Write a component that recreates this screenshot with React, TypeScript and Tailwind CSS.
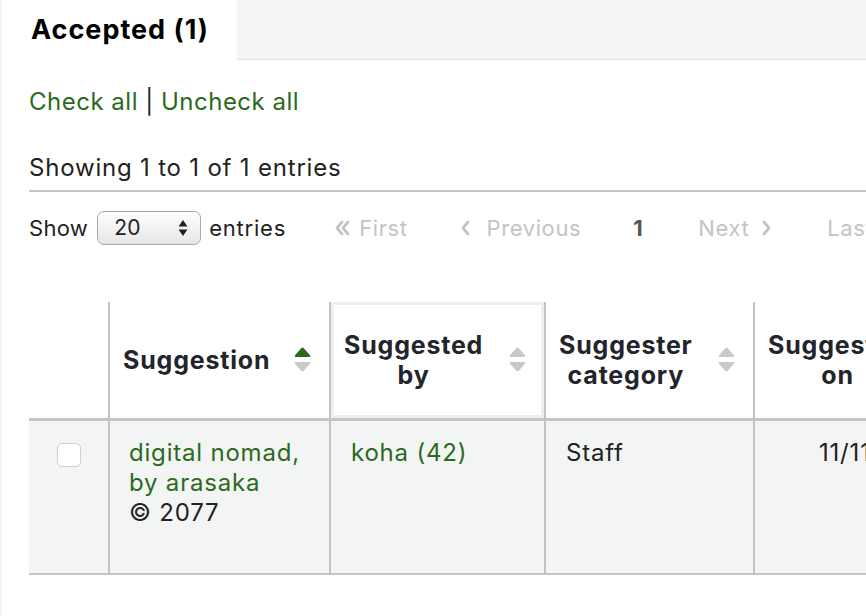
import React from 'react';

const font = { fontFamily: 'Inter, "Noto Sans", sans-serif' };

function SortIcon({ active = false }: { active?: boolean }) {
  return (
    <svg width="17" height="26" viewBox="0 0 17 26" className="shrink-0">
      <path
        d="M7 1.4 Q8.5 -0.2 10 1.4 L16 8.2 Q17 10 15 10 H2 Q0 10 1 8.2 Z"
        fill={active ? '#2b6a1d' : '#c9c9c9'}
      />
      <path d="M2 15 H15 Q17 15 16 16.8 L10 23.6 Q8.5 25.2 7 23.6 L1 16.8 Q0 15 2 15 Z" fill="#c9c9c9" />
    </svg>
  );
}

function Chevron({ dir, double = false }: { dir: 'left' | 'right'; double?: boolean }) {
  const d = dir === 'left' ? 'M8 2 L3 8 L8 14' : 'M3 2 L8 8 L3 14';
  return (
    <svg
      width={double ? 16 : 11}
      height="16"
      viewBox={double ? '0 0 16 16' : '0 0 11 16'}
      fill="none"
      className="shrink-0"
    >
      <path d={d} stroke="#c4c4c4" strokeWidth="2.8" strokeLinecap="round" strokeLinejoin="round" />
      {double && (
        <path d="M14 2 L9 8 L14 14" stroke="#c4c4c4" strokeWidth="2.8" strokeLinecap="round" strokeLinejoin="round" />
      )}
    </svg>
  );
}

function HeaderCell({
  children,
  active = false,
  focused = false
}: {
  children: React.ReactNode;
  active?: boolean;
  focused?: boolean;
}) {
  return (
    <th
      className={`align-middle border-l-2 border-[#c2c2c2] p-0 ${
        focused ? 'shadow-[inset_0_0_0_3px_#efefef]' : ''
      }`}
    >
      <div className="flex items-center h-[116px] pl-[13px] pr-[18px]">
        <span className="text-center whitespace-nowrap text-[25px] leading-[30px] tracking-[0.8px] font-bold text-[#22252a]">
          {children}
        </span>
        <span className="flex-1" />
        <SortIcon active={active} />
      </div>
    </th>
  );
}

export default function App() {
  return (
    <div className="w-[866px] h-[616px] overflow-hidden bg-[#f3f4f4]" style={font}>
      <div className="ml-[2px] bg-white h-full">
        {/* Tabs */}
        <div className="flex h-[60px]">
          <div className="w-[235px] bg-white flex items-center pl-[29px] text-[27px] tracking-[1px] font-bold text-black">
            Accepted (1)
          </div>
          <div className="flex-1 bg-[#f3f4f4] border-b border-[#dfe1e1]" />
        </div>

        <div className="pl-[27px]">
          <div className="mt-[27px] text-[24px] leading-[30px] tracking-[0.5px] text-[#222]">
            <a className="text-[#2b6a1d]">Check all</a> | <a className="text-[#2b6a1d]">Uncheck all</a>
          </div>

          <div className="mt-[36px] text-[24px] leading-[30px] tracking-[0.8px] text-[#222] pb-[7px] border-b-2 border-[#c4c4c4]">
            Showing 1 to 1 of 1 entries
          </div>

          {/* Length + pagination */}
          <div className="flex items-center h-[34px] mt-[19px] text-[22px] tracking-[0.3px] text-[#222] whitespace-nowrap">
            <span className="shrink-0">Show</span>
            <div className="shrink-0 ml-[9px] w-[104px] h-[34px] rounded-[7px] border border-[#a9a9a9] bg-gradient-to-b from-white to-[#e6e6e6] flex items-center pl-[16px] pr-[12px]">
              <span className="flex-1 text-[21px]">20</span>
              <svg width="10" height="18" viewBox="0 0 10 18">
                <path d="M5 1 L9.5 7.5 H0.5 Z" fill="#222" />
                <path d="M0.5 10.5 H9.5 L5 17 Z" fill="#222" />
              </svg>
            </div>
            <span className="shrink-0 ml-[8px] tracking-[0.8px]">entries</span>

            <div className="shrink-0 flex items-center ml-[48px] text-[22px] tracking-[0.6px] text-[#c4c4c4]">
              <Chevron dir="left" double />
              <span className="ml-[9px]">First</span>
              <span className="ml-[52px]">
                <Chevron dir="left" />
              </span>
              <span className="ml-[16px]">Previous</span>
              <span className="ml-[52px] font-bold text-[#555]">1</span>
              <span className="ml-[55px]">Next</span>
              <span className="ml-[12px]">
                <Chevron dir="right" />
              </span>
              <span className="ml-[55px]">Last</span>
            </div>
          </div>

          {/* Table */}
          <table className="mt-[57px] border-collapse table-fixed w-[925px]">
            <colgroup>
              <col className="w-[80px]" />
              <col className="w-[221px]" />
              <col className="w-[215px]" />
              <col className="w-[209px]" />
              <col className="w-[200px]" />
            </colgroup>
            <thead>
              <tr className="border-b-[3px] border-[#c4c4c4]">
                <th className="h-[116px] p-0" />
                <HeaderCell active>Suggestion</HeaderCell>
                <HeaderCell focused>
                  Suggested
                  <br />
                  by
                </HeaderCell>
                <HeaderCell>
                  Suggester
                  <br />
                  category
                </HeaderCell>
                <HeaderCell>
                  Suggested
                  <br />
                  on
                </HeaderCell>
              </tr>
            </thead>
            <tbody>
              <tr className="bg-[#f3f4f4] border-b-2 border-[#c4c4c4] text-[24px] leading-[30px] tracking-[0.8px] text-[#222]">
                <td className="h-[154px] align-top pt-[22px] text-center">
                  <span className="inline-block w-[24px] h-[24px] rounded-[5px] border border-[#cfcfcf] bg-white" />
                </td>
                <td className="align-top border-l-2 border-[#c2c2c2] pt-[17px] pl-[19px] whitespace-nowrap">
                  <a className="text-[#2b6a1d]">
                    digital nomad,
                    <br />
                    by arasaka
                  </a>
                  <br />© 2077
                </td>
                <td className="align-top border-l-2 border-[#c2c2c2] pt-[17px] pl-[20px]">
                  <a className="text-[#2b6a1d]">koha (42)</a>
                </td>
                <td className="align-top border-l-2 border-[#c2c2c2] pt-[17px] pl-[20px]">Staff</td>
                <td className="align-top border-l-2 border-[#c2c2c2] pt-[17px] pl-[64px] whitespace-nowrap">11/11/2077</td>
              </tr>
            </tbody>
          </table>
        </div>
      </div>
    </div>
  );
}
